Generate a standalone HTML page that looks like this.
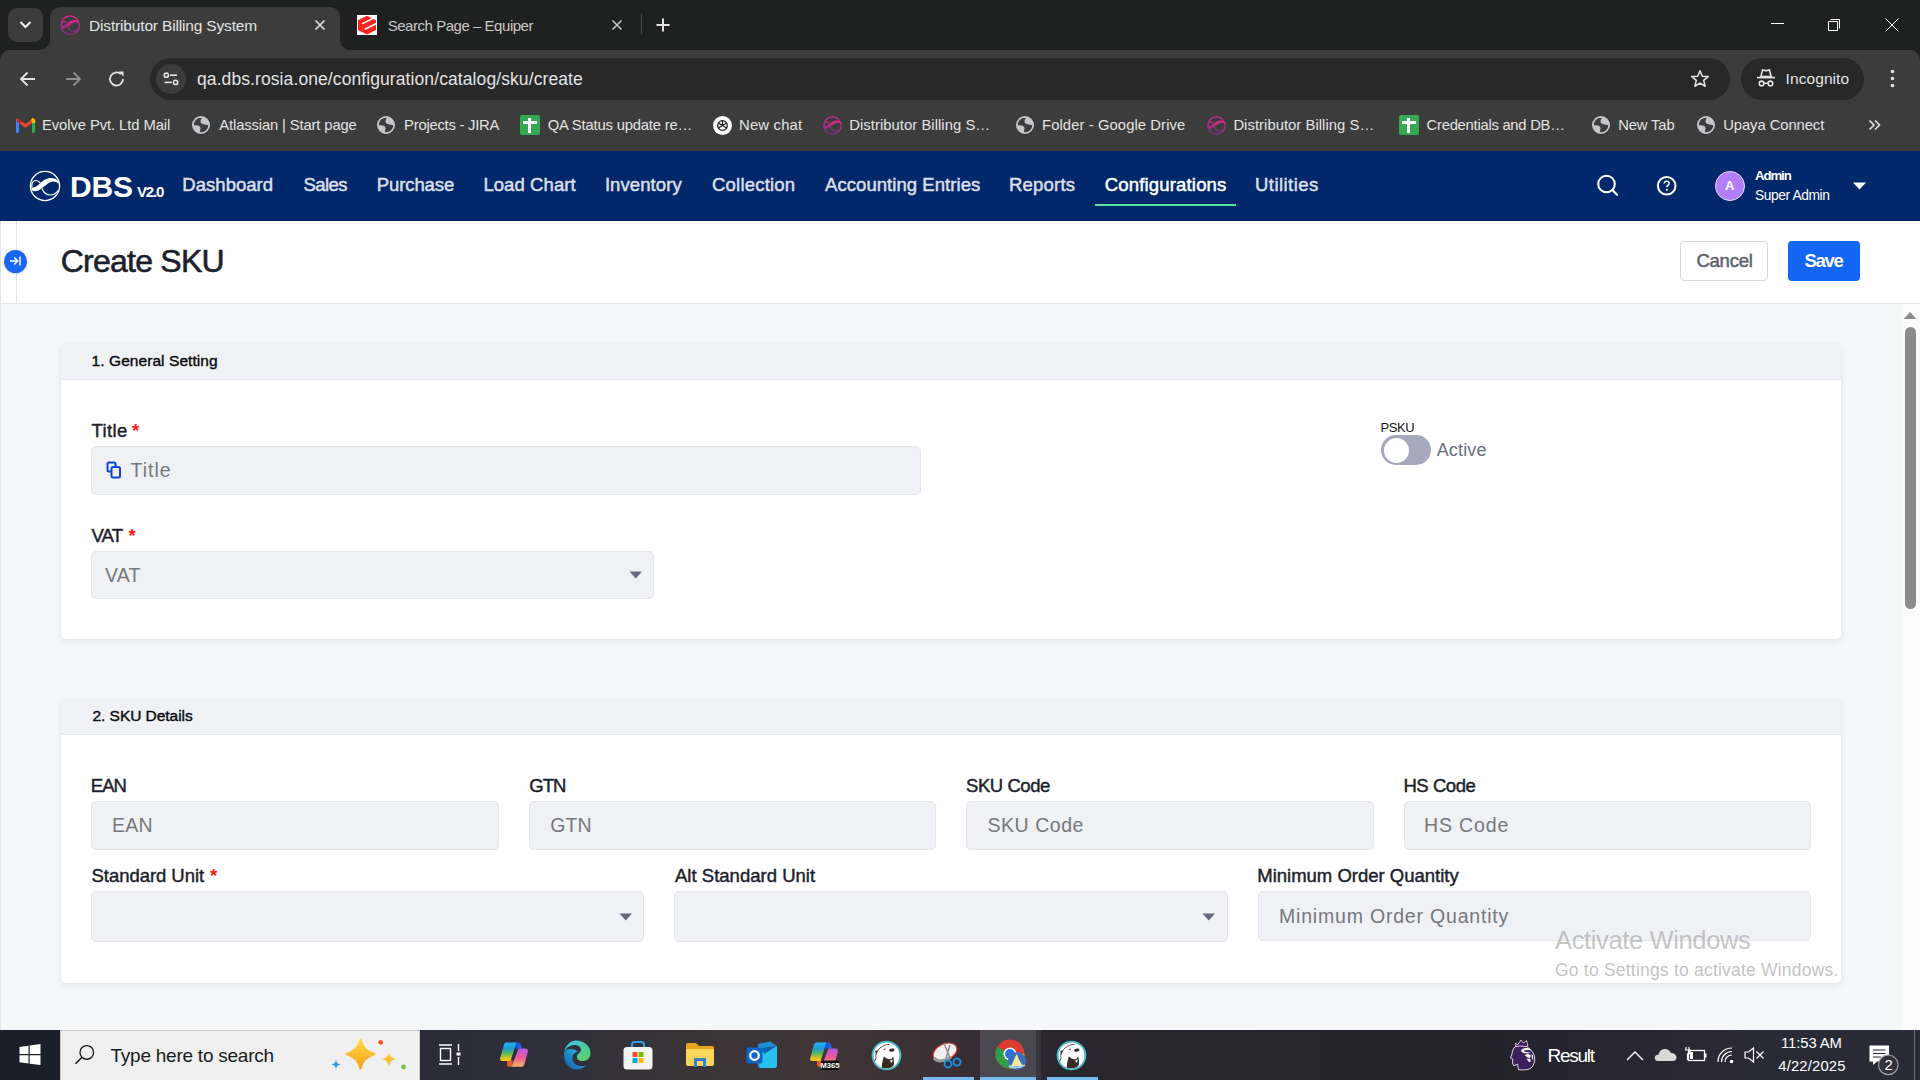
<!DOCTYPE html>
<html><head><meta charset="utf-8"><title>Create SKU</title>
<style>
html,body{margin:0;padding:0}
body{width:1920px;height:1080px;position:relative;overflow:hidden;background:#f6f7f9;font-family:"Liberation Sans",sans-serif}
.a{position:absolute;box-sizing:border-box}
.tx{position:absolute;white-space:nowrap;font-family:"Liberation Sans",sans-serif}
svg{position:absolute;overflow:visible}
</style></head><body>

<!-- ============ CHROME FRAME ============ -->
<div class="a" style="left:0;top:0;width:1920px;height:60px;background:#1f2020"></div>
<!-- tab search button -->
<div class="a" style="left:8px;top:8px;width:35px;height:34px;border-radius:9px;background:#3c3c3c"></div>
<svg style="left:0;top:0" width="60" height="50"><path d="M20.5 22 L25.5 27 L30.5 22" fill="none" stroke="#f2f2f2" stroke-width="2"/></svg>
<!-- active tab -->
<div class="a" style="left:50px;top:7px;width:290px;height:45px;border-radius:10px 10px 0 0;background:#3c3c3c"></div>
<div class="a" style="left:40px;top:40px;width:10px;height:10px;background:radial-gradient(circle at 0 0,#1f2020 9.5px,#3c3c3c 10px)"></div>
<div class="a" style="left:340px;top:40px;width:10px;height:10px;background:radial-gradient(circle at 100% 0,#1f2020 9.5px,#3c3c3c 10px)"></div>
<!-- favicon DBS -->
<svg style="left:59.7px;top:14.7px" width="20.4" height="20.4" viewBox="0.6 -0.4 30.8 30.8">
 <defs><linearGradient id="pk0" x1="0" y1="0" x2="0" y2="1"><stop offset="0" stop-color="#e2278e"/><stop offset="1" stop-color="#8e2c8c"/></linearGradient></defs>
 <circle cx="16" cy="15" r="14" fill="none" stroke="url(#pk0)" stroke-width="2"/>
 <path d="M2.5 16.5 C6 17 9 14.5 12 11.5 C15 8.5 18.5 7 22 7 C25 7 27.5 8 29.8 10 L29.5 12.8 C27.5 10.8 25.5 10.2 23.5 10.5 C20.5 11 17.5 13.5 14.5 16 C11 19 8 20.5 5 20.2 C3.7 20 3 19.5 2.5 19 Z" fill="url(#pk0)"/>
 <path d="M11.3 12 C9.5 9.8 7.5 9 5.5 9.8 C3.5 10.6 2.6 13 2.8 16.5" fill="none" stroke="url(#pk0)" stroke-width="1.6"/>
 <path d="M13 17.5 C14.5 21.5 17.5 24 21.5 24 C25 24 27.5 22 29.5 19" fill="none" stroke="url(#pk0)" stroke-width="1.6"/>
</svg>
<!-- close tab1 -->
<svg style="left:314.8px;top:20px" width="10" height="10"><path d="M0.5 0.5 L9.5 9.5 M9.5 0.5 L0.5 9.5" stroke="#e3e3e3" stroke-width="1.6"/></svg>
<!-- equiper favicon -->
<div class="a" style="left:357px;top:15px;width:20px;height:20px;background:#fff"></div>
<svg style="left:357px;top:15px" width="20" height="20" viewBox="0 0 20 20">
 <path d="M10 0.8 L19 5.2 V15 L10 19.4 L1 15 V5.2 Z" fill="#ff2020"/>
 <path d="M5 8.9 L15.8 3.5 M7.8 14.2 L20 8.3" stroke="#fff" stroke-width="1.6"/>
</svg>
<!-- close tab2 -->
<svg style="left:612.3px;top:20px" width="10" height="10"><path d="M0.5 0.5 L9.5 9.5 M9.5 0.5 L0.5 9.5" stroke="#c4c7c5" stroke-width="1.6"/></svg>
<div class="a" style="left:641px;top:14px;width:1px;height:20px;background:#4a4a4a"></div>
<svg style="left:655.5px;top:18px" width="14" height="14"><path d="M7 0.5 V13.5 M0.5 7 H13.5" stroke="#e3e3e3" stroke-width="2"/></svg>
<!-- window controls -->
<div class="a" style="left:1771px;top:23px;width:13px;height:1px;background:#fff"></div>
<svg style="left:1826px;top:17px" width="16" height="16"><path d="M2.5 4.5 H11.5 V13.5 H2.5 Z" fill="none" stroke="#fff" stroke-width="1"/><path d="M4.5 2.5 H13.5 V11.5" fill="none" stroke="#fff" stroke-width="1"/></svg>
<svg style="left:1884.5px;top:17.5px" width="14" height="14"><path d="M0.5 0.5 L13.5 13.5 M13.5 0.5 L0.5 13.5" stroke="#fff" stroke-width="1"/></svg>

<!-- toolbar -->
<div class="a" style="left:0;top:50px;width:1920px;height:101px;background:#3c3c3c;border-radius:10px 10px 0 0"></div>
<div class="a" style="left:50px;top:45px;width:290px;height:10px;background:#3c3c3c"></div>
<!-- nav icons -->
<svg style="left:18px;top:69px" width="20" height="20"><path d="M17 10 H3 M9.5 3.5 L3 10 L9.5 16.5" fill="none" stroke="#e3e3e3" stroke-width="1.8"/></svg>
<svg style="left:63px;top:69px" width="20" height="20"><path d="M3 10 H17 M10.5 3.5 L17 10 L10.5 16.5" fill="none" stroke="#8e8e8e" stroke-width="1.8"/></svg>
<svg style="left:107px;top:69px" width="20" height="20"><path d="M16 10 A6.5 6.5 0 1 1 13.8 5.1" fill="none" stroke="#e3e3e3" stroke-width="1.8"/><path d="M11.5 2.5 L16.5 2.5 L16.5 7.5 Z" fill="#e3e3e3"/></svg>
<!-- omnibox -->
<div class="a" style="left:150px;top:58px;width:1580px;height:42px;border-radius:21px;background:#282828"></div>
<div class="a" style="left:156px;top:64px;width:30px;height:30px;border-radius:50%;background:#3c3c3c"></div>
<svg style="left:161px;top:69px" width="20" height="20"><circle cx="5.3" cy="6.2" r="2.1" fill="none" stroke="#e3e3e3" stroke-width="1.6"/><path d="M9 6.2 H16" stroke="#e3e3e3" stroke-width="1.6"/><circle cx="14.6" cy="13.4" r="2.1" fill="none" stroke="#e3e3e3" stroke-width="1.6"/><path d="M3.5 13.4 H10.8" stroke="#e3e3e3" stroke-width="1.6"/></svg>
<svg style="left:1690px;top:69px" width="20" height="20"><path d="M10 1.8 L12.3 7.2 L18.2 7.6 L13.7 11.4 L15.1 17.2 L10 14.1 L4.9 17.2 L6.3 11.4 L1.8 7.6 L7.7 7.2 Z" fill="none" stroke="#e3e3e3" stroke-width="1.6" stroke-linejoin="round"/></svg>
<!-- incognito pill -->
<div class="a" style="left:1741px;top:58px;width:123px;height:42px;border-radius:21px;background:#282828"></div>
<svg style="left:1756px;top:68px" width="20" height="20"><path d="M4.8 8.6 L6.6 1.8 L9 2.6 L11 2.6 L13.4 1.8 L15.2 8.6 Z" fill="none" stroke="#e3e3e3" stroke-width="1.6" stroke-linejoin="round"/><path d="M1 9.6 H19" stroke="#e3e3e3" stroke-width="1.7"/><circle cx="5.6" cy="15.4" r="2.3" fill="none" stroke="#e3e3e3" stroke-width="1.6"/><circle cx="14.4" cy="15.4" r="2.3" fill="none" stroke="#e3e3e3" stroke-width="1.6"/><path d="M7.9 15.2 H12.1" stroke="#e3e3e3" stroke-width="1.5"/></svg>
<svg style="left:1888px;top:68px" width="10" height="22"><circle cx="4.5" cy="3.5" r="1.8" fill="#e3e3e3"/><circle cx="4.5" cy="10.5" r="1.8" fill="#e3e3e3"/><circle cx="4.5" cy="17.5" r="1.8" fill="#e3e3e3"/></svg>

<!-- bookmark icons -->
<svg style="left:16px;top:117px" width="19" height="16" viewBox="0 0 19 16">
 <path d="M1.5 14.5 V3 L9.5 9 L17.5 3 V14.5" fill="none" stroke="#ea4335" stroke-width="3" stroke-linejoin="round"/>
 <path d="M1.5 4 V14.5" stroke="#4285f4" stroke-width="3" stroke-linecap="round"/>
 <path d="M17.5 4 V14.5" stroke="#34a853" stroke-width="3" stroke-linecap="round"/>
 <path d="M15.5 2 L17.8 3.5 L17.8 6" stroke="#fbbc04" stroke-width="3"/>
 <path d="M1.5 3 L5 5.5" stroke="#c5221f" stroke-width="3"/>
</svg>
<!-- globes -->
<svg style="left:192px;top:116px" width="18" height="18" viewBox="0 0 18 18" id="g1"><circle cx="9" cy="9" r="8.1" fill="none" stroke="#c8cacf" stroke-width="1.7"/><path d="M10.2 1.2 C9 3 8.2 4.6 8.6 6.3 C9.2 8.4 12.5 8.3 16.9 9.6 A8 8 0 0 0 10.2 1.2 Z" fill="#c3c5ca"/><path d="M1.1 9.4 C4.5 9.2 7.8 9.6 8.4 11.4 C8.9 13 7.6 14.8 8.1 16.9 A8 8 0 0 1 1.1 9.4 Z" fill="#c3c5ca"/></svg>
<svg style="left:377px;top:116px" width="18" height="18" viewBox="0 0 18 18"><circle cx="9" cy="9" r="8.1" fill="none" stroke="#c8cacf" stroke-width="1.7"/><path d="M10.2 1.2 C9 3 8.2 4.6 8.6 6.3 C9.2 8.4 12.5 8.3 16.9 9.6 A8 8 0 0 0 10.2 1.2 Z" fill="#c3c5ca"/><path d="M1.1 9.4 C4.5 9.2 7.8 9.6 8.4 11.4 C8.9 13 7.6 14.8 8.1 16.9 A8 8 0 0 1 1.1 9.4 Z" fill="#c3c5ca"/></svg>
<svg style="left:1016px;top:116px" width="18" height="18" viewBox="0 0 18 18"><circle cx="9" cy="9" r="8.1" fill="none" stroke="#c8cacf" stroke-width="1.7"/><path d="M10.2 1.2 C9 3 8.2 4.6 8.6 6.3 C9.2 8.4 12.5 8.3 16.9 9.6 A8 8 0 0 0 10.2 1.2 Z" fill="#c3c5ca"/><path d="M1.1 9.4 C4.5 9.2 7.8 9.6 8.4 11.4 C8.9 13 7.6 14.8 8.1 16.9 A8 8 0 0 1 1.1 9.4 Z" fill="#c3c5ca"/></svg>
<svg style="left:1592px;top:116px" width="18" height="18" viewBox="0 0 18 18"><circle cx="9" cy="9" r="8.1" fill="none" stroke="#c8cacf" stroke-width="1.7"/><path d="M10.2 1.2 C9 3 8.2 4.6 8.6 6.3 C9.2 8.4 12.5 8.3 16.9 9.6 A8 8 0 0 0 10.2 1.2 Z" fill="#c3c5ca"/><path d="M1.1 9.4 C4.5 9.2 7.8 9.6 8.4 11.4 C8.9 13 7.6 14.8 8.1 16.9 A8 8 0 0 1 1.1 9.4 Z" fill="#c3c5ca"/></svg>
<svg style="left:1697px;top:116px" width="18" height="18" viewBox="0 0 18 18"><circle cx="9" cy="9" r="8.1" fill="none" stroke="#c8cacf" stroke-width="1.7"/><path d="M10.2 1.2 C9 3 8.2 4.6 8.6 6.3 C9.2 8.4 12.5 8.3 16.9 9.6 A8 8 0 0 0 10.2 1.2 Z" fill="#c3c5ca"/><path d="M1.1 9.4 C4.5 9.2 7.8 9.6 8.4 11.4 C8.9 13 7.6 14.8 8.1 16.9 A8 8 0 0 1 1.1 9.4 Z" fill="#c3c5ca"/></svg>
<!-- sheets -->
<div class="a" style="left:520px;top:115px;width:20px;height:20px;border-radius:2px;background:#34a853"></div>
<div class="a" style="left:523px;top:121px;width:14px;height:2.5px;background:#fff"></div>
<div class="a" style="left:528px;top:118px;width:2.5px;height:15px;background:#fff"></div>
<div class="a" style="left:1399px;top:115px;width:20px;height:20px;border-radius:2px;background:#34a853"></div>
<div class="a" style="left:1402px;top:121px;width:14px;height:2.5px;background:#fff"></div>
<div class="a" style="left:1407px;top:118px;width:2.5px;height:15px;background:#fff"></div>
<!-- openai -->
<div class="a" style="left:712.5px;top:115.5px;width:19px;height:19px;border-radius:50%;background:#fff"></div>
<svg style="left:712.5px;top:115.5px" width="19" height="19" viewBox="0 0 19 19"><g fill="none" stroke="#222" stroke-width="1.3"><circle cx="9.5" cy="9.5" r="4.8"/><path d="M9.5 4.7 V9.5 L13.6 12 M5.4 12 L9.5 9.5 M13.6 7 L9.5 9.5 L5.4 7"/></g></svg>
<!-- DBS favicons in bookmarks -->
<svg style="left:822.5px;top:115.5px" width="19" height="19" viewBox="0.6 -0.4 30.8 30.8">
 <defs><linearGradient id="pk1" x1="0" y1="0" x2="0" y2="1"><stop offset="0" stop-color="#e2278e"/><stop offset="1" stop-color="#8e2c8c"/></linearGradient></defs>
 <circle cx="16" cy="15" r="14" fill="none" stroke="url(#pk1)" stroke-width="2"/>
 <path d="M2.5 16.5 C6 17 9 14.5 12 11.5 C15 8.5 18.5 7 22 7 C25 7 27.5 8 29.8 10 L29.5 12.8 C27.5 10.8 25.5 10.2 23.5 10.5 C20.5 11 17.5 13.5 14.5 16 C11 19 8 20.5 5 20.2 C3.7 20 3 19.5 2.5 19 Z" fill="url(#pk1)"/>
 <path d="M11.3 12 C9.5 9.8 7.5 9 5.5 9.8 C3.5 10.6 2.6 13 2.8 16.5" fill="none" stroke="url(#pk1)" stroke-width="1.6"/>
 <path d="M13 17.5 C14.5 21.5 17.5 24 21.5 24 C25 24 27.5 22 29.5 19" fill="none" stroke="url(#pk1)" stroke-width="1.6"/>
</svg>
<svg style="left:1206.5px;top:115.5px" width="19" height="19" viewBox="0.6 -0.4 30.8 30.8">
 <defs><linearGradient id="pk2" x1="0" y1="0" x2="0" y2="1"><stop offset="0" stop-color="#e2278e"/><stop offset="1" stop-color="#8e2c8c"/></linearGradient></defs>
 <circle cx="16" cy="15" r="14" fill="none" stroke="url(#pk2)" stroke-width="2"/>
 <path d="M2.5 16.5 C6 17 9 14.5 12 11.5 C15 8.5 18.5 7 22 7 C25 7 27.5 8 29.8 10 L29.5 12.8 C27.5 10.8 25.5 10.2 23.5 10.5 C20.5 11 17.5 13.5 14.5 16 C11 19 8 20.5 5 20.2 C3.7 20 3 19.5 2.5 19 Z" fill="url(#pk2)"/>
 <path d="M11.3 12 C9.5 9.8 7.5 9 5.5 9.8 C3.5 10.6 2.6 13 2.8 16.5" fill="none" stroke="url(#pk2)" stroke-width="1.6"/>
 <path d="M13 17.5 C14.5 21.5 17.5 24 21.5 24 C25 24 27.5 22 29.5 19" fill="none" stroke="url(#pk2)" stroke-width="1.6"/>
</svg>
<svg style="left:1868px;top:119px" width="14" height="12"><path d="M1.5 1.5 L6 6 L1.5 10.5 M7 1.5 L11.5 6 L7 10.5" fill="none" stroke="#e3e3e3" stroke-width="1.6"/></svg>

<!-- ============ APP NAV ============ -->
<div class="a" style="left:0;top:151px;width:1920px;height:70px;background:#00286a"></div>
<svg style="left:29px;top:171px" width="32" height="32" viewBox="0 0 32 32">
 <circle cx="16" cy="15" r="14.6" fill="none" stroke="#fff" stroke-width="1.3"/>
 <path d="M2.5 16.5 C6 17 9 14.5 12 11.5 C15 8.5 18.5 7 22 7 C25 7 27.5 8 29.8 10 L29.5 12.8 C27.5 10.8 25.5 10.2 23.5 10.5 C20.5 11 17.5 13.5 14.5 16 C11 19 8 20.5 5 20.2 C3.7 20 3 19.5 2.5 19 Z" fill="#fff"/>
 <path d="M11.3 12 C9.5 9.8 7.5 9 5.5 9.8 C3.5 10.6 2.6 13 2.8 16.5" fill="none" stroke="#fff" stroke-width="1.2"/>
 <path d="M13 17.5 C14.5 21.5 17.5 24 21.5 24 C25 24 27.5 22 29.5 19" fill="none" stroke="#fff" stroke-width="1.2"/>
</svg>
<div class="a" style="left:1095px;top:204px;width:141px;height:2px;background:#58e4a0"></div>
<!-- search -->
<svg style="left:1594px;top:172px" width="26" height="26"><circle cx="12.5" cy="12" r="8.3" fill="none" stroke="#fff" stroke-width="2"/><path d="M18.5 18 L23 22.8" stroke="#fff" stroke-width="2.2" stroke-linecap="round"/></svg>
<!-- help -->
<svg style="left:1656px;top:175px" width="22" height="22"><circle cx="10.7" cy="10.8" r="8.8" fill="none" stroke="#fff" stroke-width="2"/><path d="M8.3 8.6 C8.3 6.9 9.3 6.2 10.7 6.2 C12.1 6.2 13.1 7 13.1 8.4 C13.1 10 11 10.2 10.8 12.1" fill="none" stroke="#fff" stroke-width="1.5"/><circle cx="10.8" cy="14.8" r="1" fill="#fff"/></svg>
<!-- avatar -->
<div class="a" style="left:1715px;top:171px;width:30px;height:30px;border-radius:50%;background:#b27ef9;border:1px solid #e9dcff"></div>
<span class="tx" style="left:1725px;top:179px;font-size:13px;line-height:14px;color:#fff;font-weight:bold">A</span>
<svg style="left:1853px;top:182px" width="14" height="8"><path d="M0 0.5 H13 L6.5 7.5 Z" fill="#fff"/></svg>

<!-- ============ PAGE HEADER ============ -->
<div class="a" style="left:0;top:221px;width:1920px;height:82px;background:#fff"></div>
<div class="a" style="left:0;top:303px;width:1920px;height:1px;background:#e4e5ea"></div>
<div class="a" style="left:0;top:221px;width:1px;height:809px;background:#e4e5ea"></div>
<div class="a" style="left:16px;top:221px;width:1px;height:82px;background:#e4e5ea"></div>
<div class="a" style="left:3.5px;top:249.5px;width:23px;height:23px;border-radius:50%;background:#1766f4;box-shadow:0 1px 3px rgba(0,0,0,0.2)"></div>
<svg style="left:5px;top:251px" width="20" height="20"><path d="M5 10 H12.5 M9.3 6.5 L12.8 10 L9.3 13.5" fill="none" stroke="#fff" stroke-width="1.4"/><path d="M15 5.5 V14.5" stroke="#fff" stroke-width="1.4"/></svg>
<div class="a" style="left:1680px;top:241px;width:88px;height:40px;border-radius:4px;background:#fff;border:1px solid #d6d8de"></div>
<div class="a" style="left:1788px;top:241px;width:72px;height:40px;border-radius:4px;background:#1366f5"></div>

<!-- ============ CONTENT ============ -->
<!-- scrollbar -->
<div class="a" style="left:1901px;top:304px;width:19px;height:726px;background:#fbfbfb"></div>
<svg style="left:1903px;top:311px" width="15" height="9"><path d="M0.5 8 L7 1 L13.5 8 Z" fill="#8b8b8b"/></svg>
<div class="a" style="left:1905px;top:327px;width:11px;height:282px;border-radius:5.5px;background:#8b8b8b"></div>

<!-- card 1 -->
<div class="a" style="left:61px;top:344px;width:1780px;height:295px;border-radius:5px;background:#fff;box-shadow:0 2px 7px rgba(20,25,60,0.09),0 0 1px rgba(20,25,60,0.08)"></div>
<div class="a" style="left:61px;top:344px;width:1780px;height:36px;border-radius:5px 5px 0 0;background:#f0f1f4;border-bottom:1px solid #e6e7ec"></div>
<!-- title input -->
<div class="a" style="left:91px;top:446px;width:830px;height:49px;border-radius:5px;background:#f0f1f5;border:1px solid #e5e6eb"></div>
<svg style="left:106px;top:461px" width="16" height="18" viewBox="0 0 16 18"><path d="M4.5 3.8 V2.6 C4.5 1.9 5 1.4 5.7 1.4 H9.3 C10 1.4 10.5 1.9 10.5 2.6" fill="none" stroke="#0b45d8" stroke-width="0"/><rect x="1.5" y="1.5" width="8" height="9" rx="1.5" fill="none" stroke="#0b45d8" stroke-width="2"/><rect x="5.5" y="6" width="8.5" height="10.5" rx="1.5" fill="#f0f1f5" stroke="#0b45d8" stroke-width="2"/></svg>
<!-- vat select -->
<div class="a" style="left:91px;top:551px;width:563px;height:48px;border-radius:5px;background:#f0f1f5;border:1px solid #e5e6eb"></div>
<svg style="left:629px;top:571px" width="14" height="8"><path d="M0.5 0.5 H13 L6.75 7.5 Z" fill="#666a7f"/></svg>
<!-- toggle -->
<div class="a" style="left:1381px;top:435px;width:50px;height:30px;border-radius:15px;background:#a6a8bc"></div>
<div class="a" style="left:1383.5px;top:437.5px;width:25px;height:25px;border-radius:50%;background:#fff"></div>

<!-- card 2 -->
<div class="a" style="left:61px;top:699px;width:1780px;height:284px;border-radius:5px;background:#fff;box-shadow:0 2px 7px rgba(20,25,60,0.09),0 0 1px rgba(20,25,60,0.08)"></div>
<div class="a" style="left:61px;top:699px;width:1780px;height:36px;border-radius:5px 5px 0 0;background:#f0f1f4;border-bottom:1px solid #e6e7ec"></div>
<div class="a" style="left:91px;top:801px;width:408px;height:49px;border-radius:5px;background:#f0f1f5;border:1px solid #e5e6eb"></div>
<div class="a" style="left:529px;top:801px;width:407px;height:49px;border-radius:5px;background:#f0f1f5;border:1px solid #e5e6eb"></div>
<div class="a" style="left:966px;top:801px;width:408px;height:49px;border-radius:5px;background:#f0f1f5;border:1px solid #e5e6eb"></div>
<div class="a" style="left:1404px;top:801px;width:407px;height:49px;border-radius:5px;background:#f0f1f5;border:1px solid #e5e6eb"></div>
<div class="a" style="left:91px;top:891px;width:553px;height:51px;border-radius:5px;background:#f0f1f5;border:1px solid #e5e6eb"></div>
<svg style="left:619px;top:913px" width="14" height="8"><path d="M0.5 0.5 H13 L6.75 7.5 Z" fill="#666a7f"/></svg>
<div class="a" style="left:674px;top:891px;width:554px;height:51px;border-radius:5px;background:#f0f1f5;border:1px solid #e5e6eb"></div>
<svg style="left:1202px;top:913px" width="14" height="8"><path d="M0.5 0.5 H13 L6.75 7.5 Z" fill="#666a7f"/></svg>
<div class="a" style="left:1258px;top:891px;width:553px;height:50px;border-radius:5px;background:#f0f1f5;border:1px solid #e5e6eb"></div>

<!-- ============ TASKBAR ============ -->
<div class="a" style="left:0;top:1030px;width:1920px;height:50px;background:linear-gradient(90deg,#1d202b 0px,#2a2b36 420px,#30303b 560px,#3a3336 680px,#3f3537 820px,#3a3035 950px,#2a262e 1040px,#27252d 1200px,#24232c 1500px,#2a2936 1750px,#2b2b38 1920px)"></div>
<div class="a" style="left:0;top:1030px;width:60px;height:50px;background:#1b1f2a"></div>
<svg style="left:19px;top:1044px" width="22" height="22"><path d="M0.5 3 L9.5 1.7 V10 H0.5 Z M10.7 1.5 L21.5 0 V10 H10.7 Z M0.5 11.2 H9.5 V19.5 L0.5 18.2 Z M10.7 11.2 H21.5 V21 L10.7 19.7 Z" fill="#fff"/></svg>
<div class="a" style="left:60px;top:1030px;width:360px;height:50px;background:#f0f0f0;border:1px solid #c9c9c9;border-bottom:none"></div>
<svg style="left:74px;top:1044px" width="22" height="22"><circle cx="12.8" cy="8.4" r="6.8" fill="none" stroke="#1b1b1b" stroke-width="1.4"/><path d="M8 13.2 L1.5 19.8" stroke="#1b1b1b" stroke-width="1.6"/></svg>
<!-- sparkles -->
<svg style="left:330px;top:1036px" width="80" height="40" viewBox="0 0 80 40">
 <defs><linearGradient id="sg" x1="0" y1="0" x2="0" y2="1"><stop offset="0" stop-color="#ffd84a"/><stop offset="1" stop-color="#f4a517"/></linearGradient></defs>
 <path d="M30.5 3.5 C32.5 11 35 14 44.5 18 C35 22 32.5 25 30.5 32.5 C28.5 25 26 22 16.5 18 C26 14 28.5 11 30.5 3.5 Z" fill="url(#sg)" stroke="url(#sg)" stroke-width="2" stroke-linejoin="round"/>
 <path d="M59 15 C59.8 20 60.8 21.5 66 23 C60.8 24.5 59.8 26 59 31 C58.2 26 57.2 24.5 52 23 C57.2 21.5 58.2 20 59 15 Z" fill="url(#sg)"/>
 <path d="M6 23.5 C6.5 26.5 7 27.3 10.5 28.5 C7 29.7 6.5 30.5 6 33.5 C5.5 30.5 5 29.7 1.5 28.5 C5 27.3 5.5 26.5 6 23.5 Z" fill="#2aa0e8"/>
 <circle cx="50.7" cy="6.3" r="2.4" fill="#f2572b"/>
 <circle cx="73.6" cy="31" r="2.4" fill="#7ac143"/>
</svg>
<!-- task view -->
<svg style="left:438px;top:1044px" width="24" height="22"><path d="M1 1 H14 M1 20 H14" stroke="#fff" stroke-width="1.4"/><rect x="2.5" y="4.5" width="10" height="12" fill="none" stroke="#fff" stroke-width="1.4"/><path d="M20.5 0 V7 M20.5 13 V21" stroke="#fff" stroke-width="1.4"/><rect x="18.5" y="8.5" width="4" height="3" fill="#fff"/></svg>
<!-- copilot -->
<svg style="left:496px;top:1036px" width="36" height="36" viewBox="0 0 36 36">
 <defs><linearGradient id="cp1" x1="0" y1="0" x2="0" y2="1"><stop offset="0" stop-color="#1fb0f5"/><stop offset="0.35" stop-color="#1e9bd0"/><stop offset="0.6" stop-color="#5cba58"/><stop offset="0.9" stop-color="#f2c51a"/></linearGradient>
 <linearGradient id="cp2" x1="0" y1="0" x2="0" y2="1"><stop offset="0" stop-color="#b05ae8"/><stop offset="0.5" stop-color="#ef5a98"/><stop offset="1" stop-color="#fdb35a"/></linearGradient>
 <linearGradient id="cp3" x1="0" y1="0" x2="1" y2="0"><stop offset="0" stop-color="#0d3fd0"/><stop offset="1" stop-color="#2a6ee8"/></linearGradient></defs>
 <path d="M18.5 6.5 H22.5 C24 6.5 25 8 25.8 12.5 H18 Z" fill="url(#cp3)"/>
 <path d="M11 24.5 H17 L15.5 30.8 H13 C12 30.8 11.3 30 11 28.5 Z" fill="#f0582a"/>
 <path d="M10 6.5 H20.5 L14.5 25 H6 C4.5 25 3.8 23.8 4.2 22 L7.5 10 C8.2 7.8 8.8 6.5 10 6.5 Z" fill="url(#cp1)"/>
 <path d="M22.5 12.5 H29.5 C31.5 12.5 32.2 14 31.8 16 L28.5 28 C27.8 30 27 30.8 25.5 30.8 H15.5 Z" fill="url(#cp2)"/>
</svg>
<!-- edge -->
<svg style="left:561px;top:1040px" width="30" height="30" viewBox="0 0 30 30">
 <defs><linearGradient id="eg1" x1="0" y1="1" x2="1" y2="0"><stop offset="0" stop-color="#0c59a4"/><stop offset="1" stop-color="#33c3f0"/></linearGradient><linearGradient id="eg2" x1="0" y1="0" x2="1" y2="1"><stop offset="0" stop-color="#39c3f0"/><stop offset="1" stop-color="#5ed25c"/></linearGradient></defs>
 <path d="M15 0.5 C23 0.5 29.5 6 29.5 13.5 C29.5 18.5 25.5 21 21.5 21 C17 21 15.5 18.5 16 16 C16.5 13 20 12.5 20 10 C20 7 17 5 13.5 5 C8 5 4 9 3 13 C4 6 9 0.5 15 0.5 Z" fill="url(#eg2)"/>
 <path d="M3 13 C2 22 8 29.5 15.5 29.5 C20 29.5 23 27.5 24.5 25.5 C20 27 13 26 11.5 20 C10.5 16 13 12.5 17 11.5 C13 8 4 8 3 13 Z" fill="url(#eg1)"/>
</svg>
<!-- store -->
<svg style="left:623px;top:1040px" width="30" height="30" viewBox="0 0 30 30">
 <path d="M9 8 V4.5 C9 3 10 2 11.5 2 H18.5 C20 2 21 3 21 4.5 V8" fill="none" stroke="#2b9bea" stroke-width="2.2"/>
 <rect x="0.5" y="7" width="29" height="22.5" rx="3.5" fill="#f4f4f4"/>
 <rect x="9.5" y="12" width="5" height="5" fill="#f25022"/><rect x="15.5" y="12" width="5" height="5" fill="#7fba00"/>
 <rect x="9.5" y="18" width="5" height="5" fill="#00a4ef"/><rect x="15.5" y="18" width="5" height="5" fill="#ffb900"/>
</svg>
<!-- files -->
<svg style="left:685px;top:1042px" width="30" height="26" viewBox="0 0 30 26">
 <path d="M1 3 C1 1.8 1.8 1 3 1 H11 L14 4 H27 C28.2 4 29 4.8 29 6 V8 H1 Z" fill="#e9a520"/>
 <path d="M1 7 H29 V22 C29 23.2 28.2 24 27 24 H3 C1.8 24 1 23.2 1 22 Z" fill="#fcd55a"/>
 <path d="M9 25 V16 H21 V25 H18 V19 H12 V25 Z" fill="#2f82d8"/>
</svg>
<!-- outlook -->
<svg style="left:746px;top:1041px" width="32" height="28" viewBox="0 0 32 28">
 <path d="M12 3 L24 0.5 L31 5 V24 C31 26 30 27 28 27 H14 C12.5 27 12 26 12 24.5 Z" fill="#1a8fd8"/>
 <path d="M12 13 L31 5 V24 C31 26 30 27 28 27 H14 Z" fill="#28c2f0"/>
 <path d="M16 7 L31 5 L18 13" fill="#0f5fb0"/>
 <rect x="0.5" y="6.5" width="16" height="16" rx="2" fill="#0f65c7"/>
 <circle cx="8.5" cy="14.5" r="4.3" fill="none" stroke="#fff" stroke-width="2.2"/>
</svg>
<!-- M365 copilot -->
<svg style="left:806px;top:1036px" width="36" height="36" viewBox="0 0 36 36">
 <path d="M18.5 6.5 H22.5 C24 6.5 25 8 25.8 12.5 H18 Z" fill="url(#cp3)"/>
 <path d="M11 24.5 H17 L15.5 30.8 H13 C12 30.8 11.3 30 11 28.5 Z" fill="#f0582a"/>
 <path d="M10 6.5 H20.5 L14.5 25 H6 C4.5 25 3.8 23.8 4.2 22 L7.5 10 C8.2 7.8 8.8 6.5 10 6.5 Z" fill="url(#cp1)"/>
 <path d="M22.5 12.5 H29.5 C31.5 12.5 32.2 14 31.8 16 L28.5 28 C27.8 30 27 30.8 25.5 30.8 H15.5 Z" fill="url(#cp2)"/>
 <rect x="15" y="24.5" width="18" height="9.5" rx="1.5" fill="#111"/>
 <text x="24" y="32.3" font-family="Liberation Sans" font-weight="bold" font-size="7.6" fill="#fff" text-anchor="middle">M365</text>
</svg>
<!-- dbeaver 1 -->
<svg style="left:870.5px;top:1039.5px" width="31" height="31" viewBox="0 0 31 31" id="dbv">
 <circle cx="15.5" cy="15.5" r="13.9" fill="#fff" stroke="#4ab8c4" stroke-width="1.9"/>
 <ellipse cx="20.8" cy="10.1" rx="2.7" ry="1.6" transform="rotate(-10 20.8 10.1)" fill="#3a2a26"/>
 <path d="M12.2 9.6 L14.8 8.2 L14 10 Z" fill="#3a2a26"/>
 <path d="M4.3 11 L6.8 10.2 L5.8 13 L4.8 15 Z" fill="#3a2a26"/>
 <path d="M4.6 17.5 C5 13 6.5 10 9 8 C12 5.5 15.5 4.3 18.5 4.4" fill="none" stroke="#3a2a26" stroke-width="0.8"/>
 <path d="M3.8 21 L5.2 17.6" stroke="#3a2a26" stroke-width="0.9"/>
 <path d="M10.7 27.4 C11 23 12 19 12.9 16.6 C15 18.5 17 19.5 19.2 19.2 C20.5 19 21.5 17.5 22.2 16.2 C22.8 19 23.2 22 22.9 25.1 C21 27.5 19 28 17.7 28.2 C15 28.4 12.5 28.2 10.7 27.4 Z" fill="#3a2a26"/>
 <path d="M19.4 20.2 L21.6 19.6 L21.2 22.2 L19.8 22.4 Z" fill="#fff"/>
</svg>
<!-- snipping -->
<svg style="left:932px;top:1040px" width="32" height="30" viewBox="0 0 32 30">
 <ellipse cx="13" cy="12" rx="12.5" ry="8" transform="rotate(-25 13 12)" fill="#f0f0f0" stroke="#d93636" stroke-width="1.2"/>
 <path d="M2 18 C5 22 12 22 19 17" fill="none" stroke="#9a9a9a" stroke-width="3"/>
 <path d="M12 3 L18 18 M18 5 L14 18" stroke="#8c8c8c" stroke-width="1.5"/>
 <circle cx="16" cy="24" r="3.5" fill="none" stroke="#1e88d8" stroke-width="2"/>
 <circle cx="25" cy="22" r="3.5" fill="none" stroke="#1e88d8" stroke-width="2"/>
</svg>
<!-- chrome highlight -->
<div class="a" style="left:980px;top:1030px;width:56px;height:50px;background:#4b484f"></div>
<div class="a" style="left:1036px;top:1030px;width:5px;height:50px;background:#38363d"></div>
<svg style="left:995px;top:1039px" width="33" height="33" viewBox="0 0 33 33">
 <circle cx="15" cy="15" r="14.5" fill="#db3c2f"/>
 <path d="M15 15 L2.4 22.3 A14.5 14.5 0 0 0 15 29.5 A14.5 14.5 0 0 0 22.5 27.4 Z" fill="#2f9e4a"/>
 <path d="M15 15 L2.4 22.3 A14.5 14.5 0 0 1 2.4 7.7 Z" fill="#2f9e4a"/>
 <path d="M15 15 H29.5 A14.5 14.5 0 0 1 15 29.5 Z" fill="#f7c223"/>
 <circle cx="15" cy="15" r="6.5" fill="#fff"/>
 <circle cx="15" cy="15" r="5" fill="#2a72e0"/>
 <circle cx="22" cy="22" r="9" fill="#3a6fb8"/>
 <path d="M16 27 C18 24 20 17 22 15 C23 19 25 23 28 27 Z" fill="#f2e7a0"/>
 <path d="M14 27 C18 29 25 29 30 26" fill="none" stroke="#a8d8f0" stroke-width="2"/>
</svg>
<!-- dbeaver 2 -->
<svg style="left:1056px;top:1039.5px" width="31" height="31" viewBox="0 0 31 31">
 <circle cx="15.5" cy="15.5" r="13.9" fill="#fff" stroke="#4ab8c4" stroke-width="1.9"/>
 <ellipse cx="20.8" cy="10.1" rx="2.7" ry="1.6" transform="rotate(-10 20.8 10.1)" fill="#3a2a26"/>
 <path d="M12.2 9.6 L14.8 8.2 L14 10 Z" fill="#3a2a26"/>
 <path d="M4.3 11 L6.8 10.2 L5.8 13 L4.8 15 Z" fill="#3a2a26"/>
 <path d="M4.6 17.5 C5 13 6.5 10 9 8 C12 5.5 15.5 4.3 18.5 4.4" fill="none" stroke="#3a2a26" stroke-width="0.8"/>
 <path d="M3.8 21 L5.2 17.6" stroke="#3a2a26" stroke-width="0.9"/>
 <path d="M10.7 27.4 C11 23 12 19 12.9 16.6 C15 18.5 17 19.5 19.2 19.2 C20.5 19 21.5 17.5 22.2 16.2 C22.8 19 23.2 22 22.9 25.1 C21 27.5 19 28 17.7 28.2 C15 28.4 12.5 28.2 10.7 27.4 Z" fill="#3a2a26"/>
 <path d="M19.4 20.2 L21.6 19.6 L21.2 22.2 L19.8 22.4 Z" fill="#fff"/>
</svg>
<div class="a" style="left:923px;top:1077px;width:51px;height:3px;background:#76b9ed"></div>
<div class="a" style="left:980px;top:1077px;width:56px;height:3px;background:#76b9ed"></div>
<div class="a" style="left:1047px;top:1077px;width:51px;height:3px;background:#76b9ed"></div>
<!-- premier league lion -->
<svg style="left:1504px;top:1036px" width="36" height="36" viewBox="0 0 36 36">
 <path d="M12 10 L16 9.5 L22 10 L26 13 L28.5 16 L30.5 20 L30.8 25 L29 30 L26 32.8 L22 33.8 L14.5 33.8 L13.5 28 L10 30 L8.5 27 L8.8 23 L6.5 22 L8 18 L8.5 15 L10 12 Z" fill="#3d1f5c" stroke="#e8e8f0" stroke-width="0.9"/>
 <path d="M11.5 7 L13.5 9 L17 4 L19.5 7 L22.5 4.5 L24 10 L22 10.5 L16 10 L12 10.5 Z" fill="#3d1f5c" stroke="#e8e8f0" stroke-width="0.8"/>
 <path d="M17 14.5 C18 12 22 11.5 25.5 12.5 L27 14.5 C24 13.8 21 13.8 19.5 15 C21 15.8 24 16 26.5 16.5 L24 17.5 C21 17.5 17.5 17 17 14.5 Z" fill="#f2f4f8"/>
 <path d="M20.5 19 L24 18 L27 19 L26 22 L23.5 21.5 Z M22.5 23 L26 22.5 L27 25.5 L25 26 Z M27.5 18.5 L29 19 L29.2 24 L28 23 Z" fill="#f2f4f8"/>
</svg>
<svg style="left:1626px;top:1050px" width="18" height="11"><path d="M1 10 L9 2 L17 10" fill="none" stroke="#fff" stroke-width="1.4"/></svg>
<svg style="left:1654px;top:1046px" width="23" height="16" viewBox="0 0 23 16"><path d="M4 15 C1.5 15 0.5 13 0.8 11.5 C1 9.5 3 8.5 4.5 9 C5 5 8 3 11 3 C14 3 16 5 17 7 C20 7 22.5 9 22.5 11.5 C22.5 13.5 21 15 19 15 Z" fill="#d8d8d8"/></svg>
<svg style="left:1684px;top:1046px" width="23" height="16"><rect x="4.5" y="4.5" width="16" height="10" fill="none" stroke="#fff" stroke-width="1.3"/><rect x="21" y="7.5" width="1.5" height="4" fill="#fff"/><rect x="6" y="6" width="3" height="7" fill="#fff"/><path d="M2 1 V4 M5 1 V4 M1 4 H6 V6 C6 8 3.5 8 3.5 8 V14" fill="none" stroke="#fff" stroke-width="1.2"/></svg>
<svg style="left:1717px;top:1047px" width="17" height="17" viewBox="0 0 17 17"><g fill="none" stroke="#fff" stroke-width="1.2"><path d="M1 15 C1 7 7 1 15 1"/><path d="M4.5 15 C4.5 9 9 4.5 15 4.5"/><path d="M8 15 C8 11 11 8 15 8"/></g><circle cx="14.5" cy="14.5" r="1.8" fill="#fff"/></svg>
<svg style="left:1744px;top:1047px" width="22" height="16"><path d="M1 5 H4.5 L9.5 1 V15 L4.5 11 H1 Z" fill="none" stroke="#fff" stroke-width="1.2"/><path d="M12.5 4.5 L19.5 11.5 M19.5 4.5 L12.5 11.5" stroke="#fff" stroke-width="1.2"/></svg>
<svg style="left:1868px;top:1044px" width="34" height="34"><path d="M1.5 1.5 H21 V17.5 H9 L5 21 V17.5 H1.5 Z" fill="#fff"/><path d="M5 6 H17.5 M5 9.5 H17.5 M5 13 H13" stroke="#2a2a33" stroke-width="1.1"/><circle cx="20.3" cy="20.8" r="9.8" fill="#333238" stroke="#9a9aa0" stroke-width="1.2"/></svg>
<span class="tx" style="left:1884.5px;top:1057px;font-size:15px;line-height:16px;color:#fff">2</span>
<div class="a" style="left:1914px;top:1030px;width:1px;height:50px;background:#6e6c75"></div>

<span class="tx" style="left:89.00px;top:18.08px;font-size:15.5px;line-height:15.5px;font-weight:normal;color:#e3e3e3;letter-spacing:-0.162px;">Distributor Billing System</span>
<span class="tx" style="left:387.70px;top:18.20px;font-size:15px;line-height:15px;font-weight:normal;color:#c8c8c8;letter-spacing:-0.465px;">Search Page – Equiper</span>
<span class="tx" style="left:197.00px;top:70.79px;font-size:17.5px;line-height:17.5px;font-weight:normal;color:#e3e3e3;letter-spacing:0.091px;">qa.dbs.rosia.one/configuration/catalog/sku/create</span>
<span class="tx" style="left:1785.60px;top:70.88px;font-size:15.5px;line-height:15.5px;font-weight:normal;color:#e3e3e3;letter-spacing:0.077px;">Incognito</span>
<span class="tx" style="left:42.00px;top:117.77px;font-size:14.8px;line-height:14.8px;font-weight:normal;color:#e3e3e3;letter-spacing:-0.087px;">Evolve Pvt. Ltd Mail</span>
<span class="tx" style="left:219.30px;top:117.77px;font-size:14.8px;line-height:14.8px;font-weight:normal;color:#e3e3e3;letter-spacing:-0.136px;">Atlassian | Start page</span>
<span class="tx" style="left:404.10px;top:117.77px;font-size:14.8px;line-height:14.8px;font-weight:normal;color:#e3e3e3;letter-spacing:-0.243px;">Projects - JIRA</span>
<span class="tx" style="left:547.70px;top:117.77px;font-size:14.8px;line-height:14.8px;font-weight:normal;color:#e3e3e3;letter-spacing:-0.178px;">QA Status update re…</span>
<span class="tx" style="left:739.00px;top:117.77px;font-size:14.8px;line-height:14.8px;font-weight:normal;color:#e3e3e3;letter-spacing:0.204px;">New chat</span>
<span class="tx" style="left:849.30px;top:117.77px;font-size:14.8px;line-height:14.8px;font-weight:normal;color:#e3e3e3;letter-spacing:0.048px;">Distributor Billing S…</span>
<span class="tx" style="left:1042.00px;top:117.77px;font-size:14.8px;line-height:14.8px;font-weight:normal;color:#e3e3e3;letter-spacing:0.089px;">Folder - Google Drive</span>
<span class="tx" style="left:1233.40px;top:117.77px;font-size:14.8px;line-height:14.8px;font-weight:normal;color:#e3e3e3;letter-spacing:0.048px;">Distributor Billing S…</span>
<span class="tx" style="left:1426.60px;top:117.77px;font-size:14.8px;line-height:14.8px;font-weight:normal;color:#e3e3e3;letter-spacing:-0.262px;">Credentials and DB…</span>
<span class="tx" style="left:1618.20px;top:117.77px;font-size:14.8px;line-height:14.8px;font-weight:normal;color:#e3e3e3;letter-spacing:-0.140px;">New Tab</span>
<span class="tx" style="left:1723.20px;top:117.77px;font-size:14.8px;line-height:14.8px;font-weight:normal;color:#e3e3e3;letter-spacing:-0.074px;">Upaya Connect</span>
<span class="tx" style="left:70.00px;top:171.60px;font-size:30px;line-height:30px;font-weight:bold;color:#ffffff;letter-spacing:-0.165px;">DBS</span>
<span class="tx" style="left:137.00px;top:184.30px;font-size:15px;line-height:15px;font-weight:bold;color:#ffffff;letter-spacing:-1.172px;">V2.0</span>
<span class="tx" style="left:182.30px;top:175.94px;font-size:18.5px;line-height:18.5px;font-weight:normal;color:#dcdfe8;letter-spacing:0.036px;-webkit-text-stroke:0.5px #dcdfe8;">Dashboard</span>
<span class="tx" style="left:303.40px;top:175.94px;font-size:18.5px;line-height:18.5px;font-weight:normal;color:#dcdfe8;letter-spacing:-0.532px;-webkit-text-stroke:0.5px #dcdfe8;">Sales</span>
<span class="tx" style="left:376.70px;top:175.94px;font-size:18.5px;line-height:18.5px;font-weight:normal;color:#dcdfe8;letter-spacing:-0.081px;-webkit-text-stroke:0.5px #dcdfe8;">Purchase</span>
<span class="tx" style="left:483.40px;top:175.94px;font-size:18.5px;line-height:18.5px;font-weight:normal;color:#dcdfe8;letter-spacing:0.078px;-webkit-text-stroke:0.5px #dcdfe8;">Load Chart</span>
<span class="tx" style="left:604.90px;top:175.94px;font-size:18.5px;line-height:18.5px;font-weight:normal;color:#dcdfe8;letter-spacing:0.082px;-webkit-text-stroke:0.5px #dcdfe8;">Inventory</span>
<span class="tx" style="left:712.00px;top:175.94px;font-size:18.5px;line-height:18.5px;font-weight:normal;color:#dcdfe8;letter-spacing:0.206px;-webkit-text-stroke:0.5px #dcdfe8;">Collection</span>
<span class="tx" style="left:825.10px;top:175.94px;font-size:18.5px;line-height:18.5px;font-weight:normal;color:#dcdfe8;letter-spacing:0.053px;-webkit-text-stroke:0.5px #dcdfe8;">Accounting Entries</span>
<span class="tx" style="left:1009.00px;top:175.94px;font-size:18.5px;line-height:18.5px;font-weight:normal;color:#dcdfe8;letter-spacing:0.212px;-webkit-text-stroke:0.5px #dcdfe8;">Reports</span>
<span class="tx" style="left:1104.70px;top:175.94px;font-size:18.5px;line-height:18.5px;font-weight:normal;color:#ffffff;letter-spacing:0.181px;-webkit-text-stroke:0.5px #ffffff;">Configurations</span>
<span class="tx" style="left:1255.00px;top:175.94px;font-size:18.5px;line-height:18.5px;font-weight:normal;color:#dcdfe8;letter-spacing:0.454px;-webkit-text-stroke:0.5px #dcdfe8;">Utilities</span>
<span class="tx" style="left:1755.00px;top:169.43px;font-size:13.2px;line-height:13.2px;font-weight:bold;color:#ffffff;letter-spacing:-1.067px;">Admin</span>
<span class="tx" style="left:1755.00px;top:188.62px;font-size:13.8px;line-height:13.8px;font-weight:normal;color:#ffffff;letter-spacing:-0.408px;">Super Admin</span>
<span class="tx" style="left:60.75px;top:245.41px;font-size:32px;line-height:32px;font-weight:normal;color:#1d1f2c;letter-spacing:-0.764px;-webkit-text-stroke:0.6px #1d1f2c;">Create SKU</span>
<span class="tx" style="left:1696.40px;top:252.14px;font-size:18.5px;line-height:18.5px;font-weight:normal;color:#5f6272;letter-spacing:-0.215px;-webkit-text-stroke:0.5px #5f6272;">Cancel</span>
<span class="tx" style="left:1804.60px;top:252.14px;font-size:18.5px;line-height:18.5px;font-weight:bold;color:#ffffff;letter-spacing:-1.372px;">Save</span>
<span class="tx" style="left:91.60px;top:353.13px;font-size:15.5px;line-height:15.5px;font-weight:normal;color:#0b0b0f;letter-spacing:0.064px;-webkit-text-stroke:0.4px #0b0b0f;">1. General Setting</span>
<span class="tx" style="left:91.50px;top:421.64px;font-size:18.5px;line-height:18.5px;font-weight:normal;color:#1d1f2c;letter-spacing:0.356px;-webkit-text-stroke:0.45px #1d1f2c;">Title</span>
<span class="tx" style="left:132.00px;top:421.64px;font-size:18.5px;line-height:18.5px;font-weight:bold;color:#ff1a1a;letter-spacing:0.000px;">*</span>
<span class="tx" style="left:130.50px;top:460.99px;font-size:19.5px;line-height:19.5px;font-weight:normal;color:#76787e;letter-spacing:1.007px;">Title</span>
<span class="tx" style="left:91.50px;top:526.64px;font-size:18.5px;line-height:18.5px;font-weight:normal;color:#1d1f2c;letter-spacing:-0.866px;-webkit-text-stroke:0.45px #1d1f2c;">VAT</span>
<span class="tx" style="left:128.40px;top:526.64px;font-size:18.5px;line-height:18.5px;font-weight:bold;color:#ff1a1a;letter-spacing:0.000px;">*</span>
<span class="tx" style="left:105.00px;top:565.69px;font-size:19.5px;line-height:19.5px;font-weight:normal;color:#76787e;letter-spacing:0.141px;">VAT</span>
<span class="tx" style="left:1380.60px;top:421.00px;font-size:13px;line-height:13px;font-weight:normal;color:#15151a;letter-spacing:-0.438px;">PSKU</span>
<span class="tx" style="left:1436.70px;top:441.16px;font-size:18px;line-height:18px;font-weight:normal;color:#6b6e82;letter-spacing:0.159px;">Active</span>
<span class="tx" style="left:92.50px;top:708.38px;font-size:15.5px;line-height:15.5px;font-weight:normal;color:#0b0b0f;letter-spacing:-0.041px;-webkit-text-stroke:0.4px #0b0b0f;">2. SKU Details</span>
<span class="tx" style="left:90.70px;top:777.34px;font-size:18.5px;line-height:18.5px;font-weight:normal;color:#1d1f2c;letter-spacing:-0.889px;-webkit-text-stroke:0.45px #1d1f2c;">EAN</span>
<span class="tx" style="left:529.20px;top:777.34px;font-size:18.5px;line-height:18.5px;font-weight:normal;color:#1d1f2c;letter-spacing:-0.945px;-webkit-text-stroke:0.45px #1d1f2c;">GTN</span>
<span class="tx" style="left:966.00px;top:777.34px;font-size:18.5px;line-height:18.5px;font-weight:normal;color:#1d1f2c;letter-spacing:-0.445px;-webkit-text-stroke:0.45px #1d1f2c;">SKU Code</span>
<span class="tx" style="left:1403.40px;top:777.34px;font-size:18.5px;line-height:18.5px;font-weight:normal;color:#1d1f2c;letter-spacing:-0.430px;-webkit-text-stroke:0.45px #1d1f2c;">HS Code</span>
<span class="tx" style="left:112.00px;top:816.09px;font-size:19.5px;line-height:19.5px;font-weight:normal;color:#76787e;letter-spacing:0.244px;">EAN</span>
<span class="tx" style="left:550.30px;top:816.09px;font-size:19.5px;line-height:19.5px;font-weight:normal;color:#76787e;letter-spacing:0.010px;">GTN</span>
<span class="tx" style="left:987.50px;top:816.09px;font-size:19.5px;line-height:19.5px;font-weight:normal;color:#76787e;letter-spacing:0.531px;">SKU Code</span>
<span class="tx" style="left:1424.00px;top:816.09px;font-size:19.5px;line-height:19.5px;font-weight:normal;color:#76787e;letter-spacing:0.870px;">HS Code</span>
<span class="tx" style="left:91.50px;top:867.04px;font-size:18.5px;line-height:18.5px;font-weight:normal;color:#1d1f2c;letter-spacing:-0.040px;-webkit-text-stroke:0.45px #1d1f2c;">Standard Unit</span>
<span class="tx" style="left:210.00px;top:867.04px;font-size:18.5px;line-height:18.5px;font-weight:bold;color:#ff1a1a;letter-spacing:0.000px;">*</span>
<span class="tx" style="left:675.00px;top:867.04px;font-size:18.5px;line-height:18.5px;font-weight:normal;color:#1d1f2c;letter-spacing:0.018px;-webkit-text-stroke:0.45px #1d1f2c;">Alt Standard Unit</span>
<span class="tx" style="left:1257.30px;top:867.04px;font-size:18.5px;line-height:18.5px;font-weight:normal;color:#1d1f2c;letter-spacing:-0.007px;-webkit-text-stroke:0.45px #1d1f2c;">Minimum Order Quantity</span>
<span class="tx" style="left:1279.00px;top:906.59px;font-size:19.5px;line-height:19.5px;font-weight:normal;color:#76787e;letter-spacing:0.803px;">Minimum Order Quantity</span>
<span class="tx" style="left:1555.00px;top:928.21px;font-size:25.5px;line-height:25.5px;font-weight:normal;color:rgba(150,150,150,0.55);letter-spacing:-0.366px;">Activate Windows</span>
<span class="tx" style="left:1555.00px;top:962.19px;font-size:17.5px;line-height:17.5px;font-weight:normal;color:rgba(150,150,150,0.58);letter-spacing:0.209px;">Go to Settings to activate Windows.</span>
<span class="tx" style="left:110.50px;top:1045.92px;font-size:19px;line-height:19px;font-weight:normal;color:#1b1b1b;letter-spacing:-0.242px;">Type here to search</span>
<span class="tx" style="left:1547.60px;top:1045.82px;font-size:19px;line-height:19px;font-weight:normal;color:#ffffff;letter-spacing:-1.275px;">Result</span>
<span class="tx" style="left:1781.00px;top:1036.27px;font-size:14.8px;line-height:14.8px;font-weight:normal;color:#ffffff;letter-spacing:-0.073px;">11:53 AM</span>
<span class="tx" style="left:1778.30px;top:1059.22px;font-size:14.8px;line-height:14.8px;font-weight:normal;color:#ffffff;letter-spacing:0.163px;">4/22/2025</span>

</body></html>
